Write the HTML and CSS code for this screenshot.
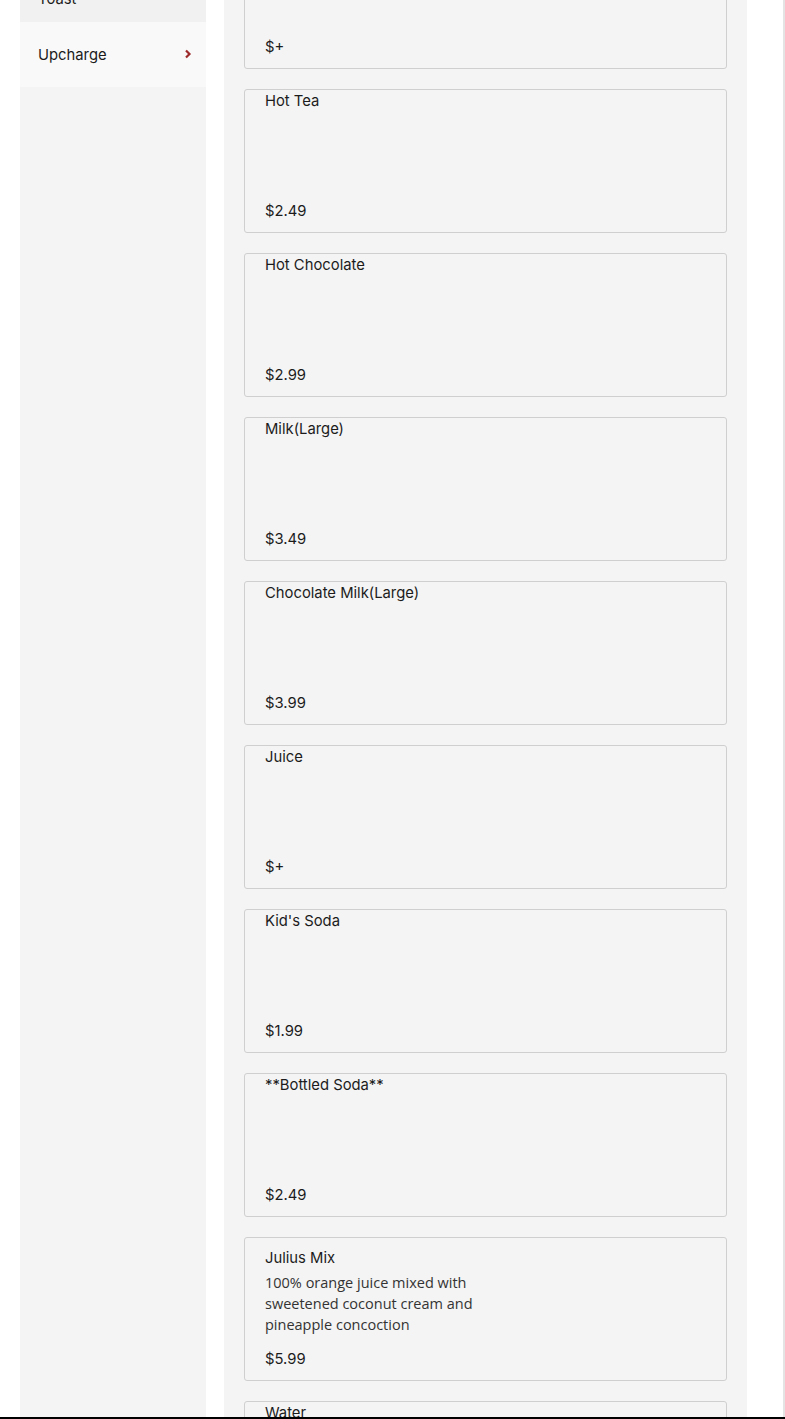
FILE: index.html
```html
<!DOCTYPE html>
<html lang="en">
<head>
<meta charset="utf-8">
<title>Menu</title>
<link rel="stylesheet" href="styles.css">
</head>
<body>
<div class="page">
  <aside class="sidebar">
    <div class="cat cat-first">Toast</div>
    <div class="cat active">Upcharge
      <svg class="chev" width="8" height="10" viewBox="0 0 8 10"><path d="M2 1.5 L5.5 5 L2 8.5" fill="none" stroke="#9e2b2b" stroke-width="2.2"/></svg>
    </div>
  </aside>
  <main class="panel">
    <div class="card"><div class="title"></div><div class="price">$+</div></div>
    <div class="card"><div class="title">Hot Tea</div><div class="price">$2.49</div></div>
    <div class="card"><div class="title">Hot Chocolate</div><div class="price">$2.99</div></div>
    <div class="card"><div class="title">Milk(Large)</div><div class="price">$3.49</div></div>
    <div class="card"><div class="title">Chocolate Milk(Large)</div><div class="price">$3.99</div></div>
    <div class="card"><div class="title">Juice</div><div class="price">$+</div></div>
    <div class="card"><div class="title">Kid's Soda</div><div class="price">$1.99</div></div>
    <div class="card"><div class="title">**Bottled Soda**</div><div class="price">$2.49</div></div>
    <div class="card has-desc"><div class="title">Julius Mix</div><div class="desc">100% orange juice mixed with sweetened coconut cream and pineapple concoction</div><div class="price">$5.99</div></div>
    <div class="card"><div class="title">Water</div><div class="price">$0.00</div></div>
  </main>
</div>
<div class="edge"></div>
<div class="bottom-line"></div>
</body>
</html>
```

FILE: styles.css
```css
html, body {
  margin: 0;
  padding: 0;
  background: #ffffff;
  overflow: hidden;
}
body {
  font-family: Inter, "Liberation Sans", sans-serif;
  color: #222;
}
.page {
  display: flex;
  align-items: stretch;
  gap: 18px;
  padding: 0 20px;
  margin-top: -95px;
}
.sidebar {
  width: 186px;
  flex: none;
  background: #f4f4f4;
  padding-top: 71px;
}
.cat {
  height: 65px;
  display: flex;
  align-items: center;
  justify-content: space-between;
  padding: 0 14px 0 18px;
  background: #f1f1f1;
  font-size: 14.8px;
  color: #1c1c1c;
}
.cat-first {
  height: 46px;
}
.cat.active {
  background: #f9f9f9;
}
.chev {
  display: block;
  margin-top: -2px;
}
.panel {
  width: 523px;
  box-sizing: border-box;
  flex: none;
  background: #f4f4f4;
  padding: 20px;
  display: flex;
  flex-direction: column;
  gap: 20px;
}
.card {
  box-sizing: border-box;
  height: 144px;
  border: 1px solid #cfcfcf;
  border-radius: 3px;
  background: #f4f4f4;
  padding: 1px 20px 11px;
  display: flex;
  flex-direction: column;
}
.card.has-desc {
  padding-top: 10px;
}
.title {
  font-size: 14.8px;
  line-height: 20px;
  min-height: 20px;
  color: #1c1c1c;
}
.desc {
  font-family: "Open Sans", "Liberation Sans", sans-serif;
  font-size: 14.5px;
  line-height: 21px;
  color: #333;
  max-width: 230px;
  margin-top: 4px;
}
.price {
  margin-top: auto;
  font-size: 14.8px;
  line-height: 20px;
  color: #1c1c1c;
}
.edge {
  position: fixed;
  top: 0;
  right: 0;
  width: 2px;
  height: 100%;
  background: #e4e4e4;
}
.bottom-line {
  position: fixed;
  left: 0;
  right: 0;
  bottom: 0;
  height: 2px;
  background: #000;
}
```
